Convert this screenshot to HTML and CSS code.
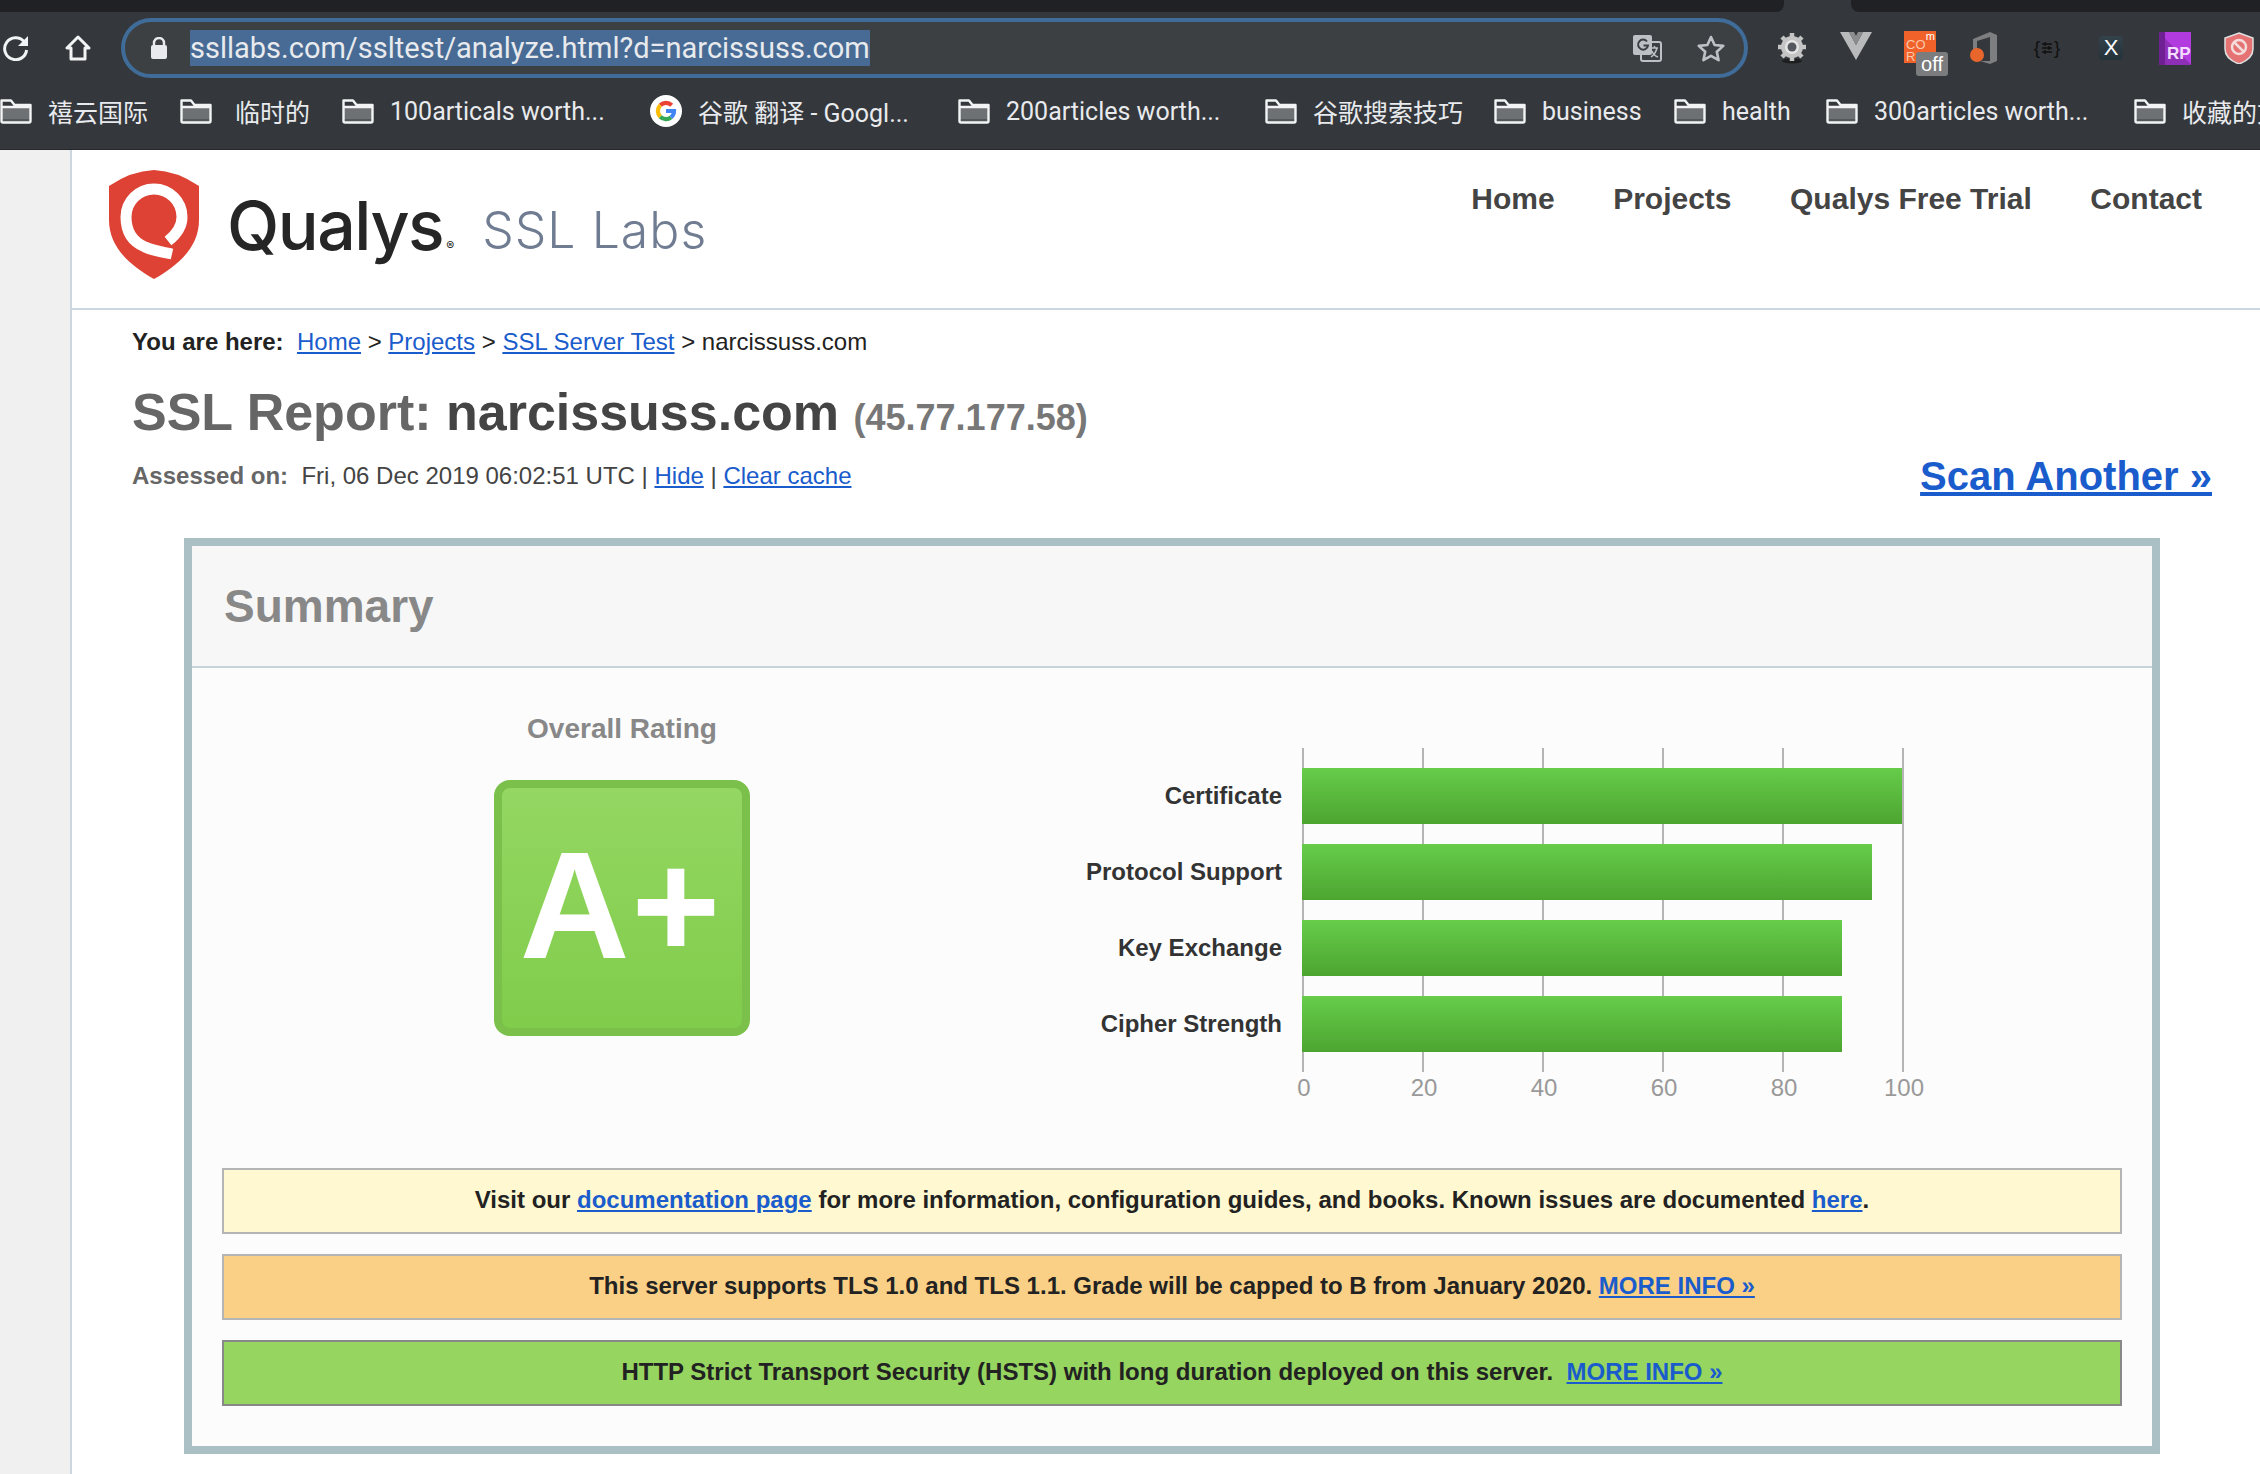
FILE: index.html
```html
<!DOCTYPE html>
<html lang="en">
<head>
    <meta charset="UTF-8">
    <title>SSL Server Test: narcissuss.com</title>
    <link rel="stylesheet" href="styles.css">
</head>
<body>
    <svg class="defs" width="0" height="0">
        <symbol id="folder" viewBox="0 0 32 25">
            <path d="M2 9h28v14H2z" fill="#6e7174"/>
            <path d="M2 20h28v3H2z" fill="#55585b"/>
            <path d="M1.500 1.500h9.500l3.500 4.500h16v16a1.500 1.500 0 0 1-1.500 1.500H3a1.500 1.500 0 0 1-1.500-1.500zM1.500 8h29" fill="none" stroke="#f1f3f4" stroke-width="2.400" stroke-linejoin="round"/>
        </symbol>
    </svg>

    <div class="tabstrip"><div class="tab-left"></div><div class="tab-right"></div></div>

    <div class="toolbar">
        <svg class="reload" width="28" height="26" viewBox="0 0 28 26"><path d="M22 6.500A11 11 0 1 0 24.600 15" fill="none" stroke="#f1f3f4" stroke-width="3"/><path d="M26 1v10H16z" fill="#f1f3f4"/></svg>
        <svg class="home" width="26" height="26" viewBox="0 0 26 26"><path d="M13 2 2 13h4v11h14V13h4z" fill="none" stroke="#f1f3f4" stroke-width="3" stroke-linejoin="round"/></svg>
        <div class="omnibox">
            <svg class="lock" width="18" height="22" viewBox="0 0 18 22"><path d="M4 9V6a5 5 0 0 1 10 0v3" fill="none" stroke="#e8eaed" stroke-width="2.400"/><rect x="1" y="8" width="16" height="14" rx="2" fill="#e8eaed"/></svg>
            <span class="url">ssllabs.com/ssltest/analyze.html?d=narcissuss.com</span>
            <svg class="translate" width="30" height="28" viewBox="0 0 30 28"><rect x="9" y="8" width="20" height="19" rx="2" fill="#3c4043" stroke="#bdc1c6" stroke-width="2"/><rect x="1" y="1" width="19" height="20" rx="2" fill="#bdc1c6"/><path d="M15 7.500a5 5 0 1 0 1 4h-4.500" fill="none" stroke="#3c4043" stroke-width="2"/><path d="M19 14h7M22.500 12v2M25 14c-1 4-3 7-6 9M20 17c1 3 3 5 6 6" fill="none" stroke="#bdc1c6" stroke-width="1.500"/></svg>
            <svg class="star" width="30" height="29" viewBox="0 0 30 29"><path d="M15 3l3.600 8 8.700.900-6.500 5.800 1.800 8.500L15 21.900l-7.600 4.300 1.800-8.500-6.500-5.800 8.700-.9z" fill="none" stroke="#bdc1c6" stroke-width="2.600" stroke-linejoin="round"/></svg>
        </div>
        <div class="extensions">
            <svg class="ext ext-gear" width="30" height="32" viewBox="0 0 30 32"><ellipse cx="15" cy="29" rx="10" ry="2.500" fill="#1d1e20"/><g fill="#c4c4c4"><circle cx="15" cy="15" r="11"/><g stroke="#c4c4c4" stroke-width="4.500"><path d="M15 1v28M1 15h28M5 5l20 20M25 5 5 25"/></g></g><circle cx="15" cy="15" r="7" fill="#e6e6e6"/><circle cx="15" cy="15" r="4.500" fill="#55585c"/></svg>
            <svg class="ext ext-v" width="32" height="28" viewBox="0 0 32 28"><path d="M0 0h9l7 13L23 0h9L16 28z" fill="#b9babb"/><path d="M9 0h5l2 4 2-4h5l-7 13z" fill="#8b8d8f"/></svg>
            <div class="ext ext-cor">
                <span class="cor-m">m</span>
                <span class="cor-co">CO</span>
                <span class="cor-r">R</span>
                <span class="cor-off">off</span>
            </div>
            <svg class="ext ext-office" width="28" height="34" viewBox="0 0 28 34"><path d="M3 8 20 1l7 3v26l-7 3-10-3h10V6L7 10v10H3z" fill="#7d7e80"/><circle cx="7" cy="24" r="7" fill="#e8662b"/></svg>
            <div class="ext ext-braces">
                <span>{</span>
                <svg width="12" height="12" viewBox="0 0 12 12"><path d="M1 2h10M1 6h10M1 10h10" stroke="#111" stroke-width="1.500"/><path d="M4 0v4M8 4v4M4 8v4" stroke="#111" stroke-width="1.500"/></svg>
                <span>}</span>
            </div>
            <div class="ext ext-x">X</div>
            <div class="ext ext-rp">RP</div>
            <svg class="ext ext-shield" width="30" height="32" viewBox="0 0 30 32"><path d="M15 1 29 6v11c0 7-6 12-14 15C7 29 1 24 1 17V6z" fill="#e57373" stroke="#dde0e0" stroke-width="1.500"/><circle cx="15" cy="15" r="7" fill="none" stroke="#f4dcdc" stroke-width="2.500"/><path d="m10 10 10 10" stroke="#f4dcdc" stroke-width="2.500"/></svg>
        </div>
    </div>

    <div class="bookmarks">
        <div class="bookmark"><svg class="folder"><use href="#folder"/></svg><span>禧云国际</span></div>
        <div class="bookmark bookmark-spaced"><svg class="folder"><use href="#folder"/></svg><span>临时的</span></div>
        <div class="bookmark"><svg class="folder"><use href="#folder"/></svg><span>100articals worth...</span></div>
        <div class="bookmark">
            <svg class="favicon" width="32" height="32" viewBox="0 0 32 32"><circle cx="16" cy="16" r="16" fill="#fff"/><path d="M10.300 10.300a8 8 0 0 1 11.400 0" fill="none" stroke="#ea4335" stroke-width="4.200"/><path d="M10.300 10.300a8 8 0 0 0 0 11.400" fill="none" stroke="#fbbc05" stroke-width="4.200"/><path d="M10.300 21.700a8 8 0 0 0 10.700.6" fill="none" stroke="#34a853" stroke-width="4.200"/><path d="M21 22.300a8 8 0 0 0 3-6.300h-8" fill="none" stroke="#4285f4" stroke-width="4.200"/></svg>
            <span>谷歌 翻译 - Googl...</span>
        </div>
        <div class="bookmark"><svg class="folder"><use href="#folder"/></svg><span>200articles worth...</span></div>
        <div class="bookmark"><svg class="folder"><use href="#folder"/></svg><span>谷歌搜索技巧</span></div>
        <div class="bookmark"><svg class="folder"><use href="#folder"/></svg><span>business</span></div>
        <div class="bookmark"><svg class="folder"><use href="#folder"/></svg><span>health</span></div>
        <div class="bookmark"><svg class="folder"><use href="#folder"/></svg><span>300articles worth...</span></div>
        <div class="bookmark"><svg class="folder"><use href="#folder"/></svg><span>收藏的文章</span></div>
    </div>

    <div class="page">
        <div class="gutter"></div>
        <div class="main">
            <div class="header">
                <div class="logo">
                    <svg class="shield" width="92" height="109" viewBox="0 0 90 109"><path d="M0 16Q22 1 45 0 68 1 90 16V50C90 78 68 96 45 109 22 96 0 78 0 50Z" fill="#dd4235"/><path d="M59 71C68 64 73 56 73 47A28 28 0 0 0 17 47C17 62 24 72 36 77 44 81 54 82 63 84" fill="none" stroke="#fff" stroke-width="11"/></svg>
                    <span class="logo-qualys">Qualys<small>®</small></span>
                    <span class="logo-ssl">SSL Labs</span>
                </div>
                <div class="nav">
                    <span>Home</span>
                    <span>Projects</span>
                    <span>Qualys Free Trial</span>
                    <span>Contact</span>
                </div>
            </div>

            <div class="report">
                <div class="crumbs"><b>You are here:</b> &nbsp;<a href="#">Home</a> &gt; <a href="#">Projects</a> &gt; <a href="#">SSL Server Test</a> &gt; narcissuss.com</div>
                <h1 class="title">SSL Report: <span class="host">narcissuss.com</span> <small class="ip">(45.77.177.58)</small></h1>
                <div class="assessed">
                    <div><b class="muted">Assessed on:</b>&nbsp; Fri, 06 Dec 2019 06:02:51 UTC | <a href="#">Hide</a> | <a href="#">Clear cache</a></div>
                    <a class="scan" href="#">Scan Another »</a>
                </div>
            </div>

            <div class="summary">
                <div class="summary-head">Summary</div>
                <div class="summary-body">
                    <div class="overview">
                        <div class="rating">
                            <div class="rating-label">Overall Rating</div>
                            <div class="grade">A+</div>
                        </div>
                        <div class="chart">
                            <div class="chart-labels">
                                <span>Certificate</span>
                                <span>Protocol Support</span>
                                <span>Key Exchange</span>
                                <span>Cipher Strength</span>
                            </div>
                            <div>
                                <div class="plot">
                                    <div class="bar" style="width: 100%"></div>
                                    <div class="bar" style="width: 95%"></div>
                                    <div class="bar" style="width: 90%"></div>
                                    <div class="bar" style="width: 90%"></div>
                                </div>
                                <div class="ticks">
                                    <span>0</span><span>20</span><span>40</span><span>60</span><span>80</span><span>100</span>
                                </div>
                            </div>
                        </div>
                    </div>
                    <div class="note note-info">Visit our <a href="#">documentation page</a> for more information, configuration guides, and books. Known issues are documented <a href="#">here</a>.</div>
                    <div class="note note-warn">This server supports TLS 1.0 and TLS 1.1. Grade will be capped to B from January 2020. <a href="#">MORE INFO »</a></div>
                    <div class="note note-good">HTTP Strict Transport Security (HSTS) with long duration deployed on this server. &nbsp;<a href="#">MORE INFO »</a></div>
                </div>
            </div>
        </div>
    </div>
</body>
</html>
```

FILE: styles.css
```css
html, body { margin: 0; height: 1474px; overflow: hidden; background: #fff; }
body { font-family: "Liberation Sans", Arial, sans-serif; font-size: 24px; color: #222; }
a { color: #1a5ccc; }
.defs { display: block; height: 0; }

/* browser chrome */
.tabstrip { display: flex; height: 12px; background: #34373b; }
.tab-left { width: 1784px; background: #202124; border-bottom-right-radius: 8px; }
.tab-right { flex: 1; margin-left: 67px; background: #202124; border-bottom-left-radius: 8px; }

.toolbar { display: flex; align-items: center; height: 72px; background: #34373b; padding-left: 2px; }
.reload { flex: none; }
.home { flex: none; margin-left: 35px; }
.omnibox { display: flex; align-items: center; box-sizing: border-box; width: 1627px; height: 60px; margin-left: 30px; padding-left: 25px; background: #3c4043; border: 4px solid #3f6c99; border-radius: 30px; }
.lock { flex: none; }
.url { margin-left: 22px; padding: 1px 0; background: #476b94; color: #e8eaed; font-family: Roboto, sans-serif; font-size: 29px; line-height: 34px; }
.translate { margin-left: auto; }
.star { margin: 0 18px 0 34px; }

.extensions { flex: 1; display: flex; align-items: center; }
.ext { flex: none; }
.ext-gear { margin-left: 29px; }
.ext-v { margin-left: 33px; margin-top: -4px; }
.ext-cor { position: relative; width: 32px; height: 32px; margin-left: 32px; margin-top: -2px; background: #f0622a; color: #fbc8ac; font-size: 13px; line-height: 11px; }
.cor-m { position: absolute; top: 1px; right: 1px; color: #fff; font-size: 11px; line-height: 8px; }
.cor-co { position: absolute; top: 8px; left: 2px; }
.cor-r { position: absolute; top: 20px; left: 2px; }
.cor-off { position: absolute; left: 12px; top: 21px; width: 32px; height: 24px; background: #7b7c7e; border-radius: 3px; color: #fff; font-size: 20px; line-height: 24px; text-align: center; }
.ext-office { margin-left: 34px; }
.ext-braces { display: flex; align-items: center; justify-content: center; gap: 1px; width: 28px; margin-left: 35px; color: #111; font-size: 19px; line-height: 22px; }
.ext-x { width: 24px; height: 24px; margin-left: 38px; background: linear-gradient(#33424b, #24323a); border-radius: 4px; color: #fff; font-size: 22px; line-height: 24px; text-align: center; }
.ext-rp { box-sizing: border-box; width: 32px; height: 33px; margin-left: 36px; padding: 12px 0 0 8px; background: linear-gradient(to right, #6f2093 6px, transparent 6px), linear-gradient(45deg, #8f2fb8 50%, #b23be0 50%); color: #f3dcff; font-size: 17px; font-weight: bold; line-height: 20px; }
.ext-shield { margin-left: 33px; }

.bookmarks { display: grid; grid-template-columns: 180px 162px 308px 308px 307px 229px 180px 152px 308px 1fr; align-items: center; box-sizing: border-box; height: 66px; padding-bottom: 11px; background: #34373b; border-bottom: 1px solid #26282b; white-space: nowrap; overflow: hidden; color: #e8eaed; font-family: Roboto, "Noto Sans CJK SC", sans-serif; font-size: 25px; }
.bookmark { display: flex; align-items: center; gap: 16px; }
.bookmark-spaced { gap: 23px; }
.folder { display: block; flex: none; width: 32px; height: 25px; }
.favicon { display: block; flex: none; }

/* page */
.page { display: flex; height: 1324px; }
.gutter { flex: none; width: 70px; background: #f0f0f0; border-right: 2px solid #ccd6de; }
.main { flex: 1; min-width: 0; }

.header { display: flex; justify-content: space-between; box-sizing: border-box; height: 160px; padding: 20px 58px 0 36px; border-bottom: 2px solid #c9d8e3; }
.logo { display: flex; align-items: flex-start; }
.shield { flex: none; }
.logo-qualys { margin: 13px 0 0 27px; color: #262626; font-family: Inter, sans-serif; font-size: 68px; font-weight: 500; line-height: 84px; letter-spacing: -1.500px; }
.logo-qualys small { margin-left: 3px; font-size: 12px; letter-spacing: 0; }
.logo-ssl { margin: 24px 0 0 28px; color: #6f7c91; font-family: Inter, sans-serif; font-weight: 300; font-size: 50px; line-height: 72px; letter-spacing: 1px; }
.nav { display: flex; gap: 58.500px; padding-top: 11px; color: #444; font-size: 30px; font-weight: bold; line-height: 36px; }

.report { padding: 18px 48px 0 60px; }
.crumbs { line-height: 28px; }
.title { margin: 26px 0 0; color: #666; font-size: 52px; line-height: 60px; font-weight: bold; }
.host { color: #444; }
.ip { color: #777; font-size: 36px; }
.assessed { display: flex; justify-content: space-between; align-items: center; margin-top: 4px; color: #444; }
.muted { color: #666; }
.scan { font-size: 40px; font-weight: bold; line-height: 48px; }

.summary { box-sizing: border-box; width: 1976px; height: 916px; margin: 38px 0 0 112px; background: #fcfcfc; border: 8px solid #aac0c4; }
.summary-head { box-sizing: border-box; height: 122px; padding: 35px 0 0 32px; background: #f7f7f7; border-bottom: 2px solid #c5d4d6; color: #888; font-size: 46px; font-weight: bold; line-height: 50px; }
.summary-body { padding: 0 30px; }

.overview { display: flex; height: 500px; }
.rating { flex: none; width: 256px; margin-left: 272px; padding-top: 44px; text-align: center; }
.rating-label { color: #888; font-size: 28px; font-weight: bold; line-height: 34px; }
.grade { box-sizing: border-box; width: 256px; height: 256px; margin-top: 34px; background: linear-gradient(#94d762, #80cc4b); border: 8px solid #7bc04a; border-radius: 16px; color: #fff; font-size: 152px; font-weight: bold; line-height: 234px; letter-spacing: 2px; text-indent: -2px; white-space: nowrap; }

.chart { display: flex; margin: 80px 0 0 274px; }
.chart-labels { display: flex; flex-direction: column; gap: 20px; width: 258px; padding: 20px 20px 0 0; color: #333; font-weight: bold; text-align: right; white-space: nowrap; }
.chart-labels span { height: 56px; line-height: 56px; }
.plot { display: flex; flex-direction: column; gap: 20px; box-sizing: border-box; width: 602px; height: 324px; padding: 20px 2px 0 0; background: repeating-linear-gradient(to right, #b5b5b5 0 2px, transparent 2px 120px); }
.bar { height: 56px; background: linear-gradient(#66cc4a, #4ca530); }
.ticks { display: flex; width: 720px; margin: 1px 0 0 -58px; color: #999; line-height: 30px; }
.ticks span { flex: 0 0 120px; text-align: center; }

.note { box-sizing: border-box; height: 66px; margin-bottom: 20px; border: 2px solid #b5b5b5; font-weight: bold; line-height: 60px; text-align: center; }
.note-info { background: #fff8d0; }
.note-warn { background: #f9d085; }
.note-good { background: #95d560; border-color: #888; }
```
